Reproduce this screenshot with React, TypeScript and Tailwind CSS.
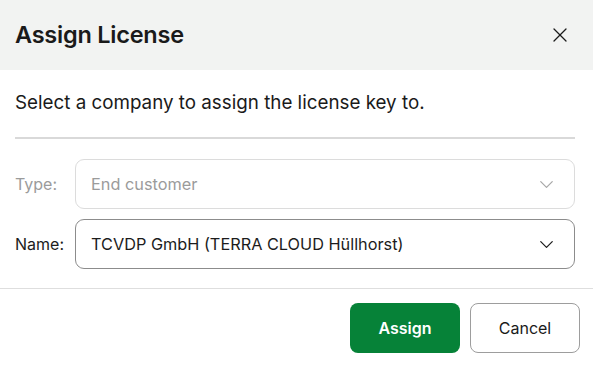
import { X, ChevronDown } from "lucide-react";

const font = { fontFamily: "Inter, 'Noto Sans', sans-serif" };

function SelectRow({
  label,
  value,
  disabled = false,
}: {
  label: string;
  value: string;
  disabled?: boolean;
}) {
  return (
    <div className="flex items-center">
      <span
        className={[
          "w-[60px] shrink-0 text-[16px]",
          disabled ? "text-[#9b9b9b]" : "text-[#1c1c1c]",
        ].join(" ")}
      >
        {label}
      </span>
      <div
        className={[
          "flex h-[50px] flex-1 items-center justify-between rounded-[9px] border bg-white pl-[15px] pr-[16px]",
          disabled ? "border-[#dcdcdc]" : "border-[#8c8c8c]",
        ].join(" ")}
      >
        <span
          className={[
            "text-[16.3px]",
            disabled ? "text-[#9b9b9b]" : "text-[#1c1c1c]",
          ].join(" ")}
        >
          {value}
        </span>
        <ChevronDown
          size={23}
          strokeWidth={1.3}
          className={disabled ? "text-[#a8a8a8]" : "text-[#1c1c1c]"}
        />
      </div>
    </div>
  );
}

export default function App() {
  return (
    <div className="h-[366px] w-[593px] overflow-hidden bg-white" style={font}>
      <div className="flex h-[70px] items-center justify-between bg-[#f2f3f2] pl-[15px] pr-[21px]">
        <h1 className="text-[23.5px] font-semibold tracking-[-0.01em] text-[#1a1a1a]">
          Assign License
        </h1>
        <X size={24} strokeWidth={1.3} className="text-[#1a1a1a]" />
      </div>

      <div className="px-[15px] pt-[19px]">
        <p className="text-[18.8px] leading-[28px] text-[#1a1a1a]">
          Select a company to assign the license key to.
        </p>
        <div className="mt-[20px] mr-[3px] h-[2px] bg-[#d9d9d9]" />
        <div className="mt-[20px] mr-[3px] flex flex-col gap-[10px]">
          <SelectRow label="Type:" value="End customer" disabled />
          <SelectRow label="Name:" value="TCVDP GmbH (TERRA CLOUD Hüllhorst)" />
        </div>
      </div>

      <div className="mt-[19px] border-t border-[#dedede]" />

      <div className="flex justify-end gap-[10px] pt-[14px] pr-[13px]">
        <button className="h-[50px] w-[110px] rounded-[8px] bg-[#068238] text-[16px] font-semibold text-white">
          Assign
        </button>
        <button className="h-[50px] w-[110px] rounded-[8px] border border-[#9d9d9d] bg-white text-[16px] text-[#1a1a1a]">
          Cancel
        </button>
      </div>
    </div>
  );
}
